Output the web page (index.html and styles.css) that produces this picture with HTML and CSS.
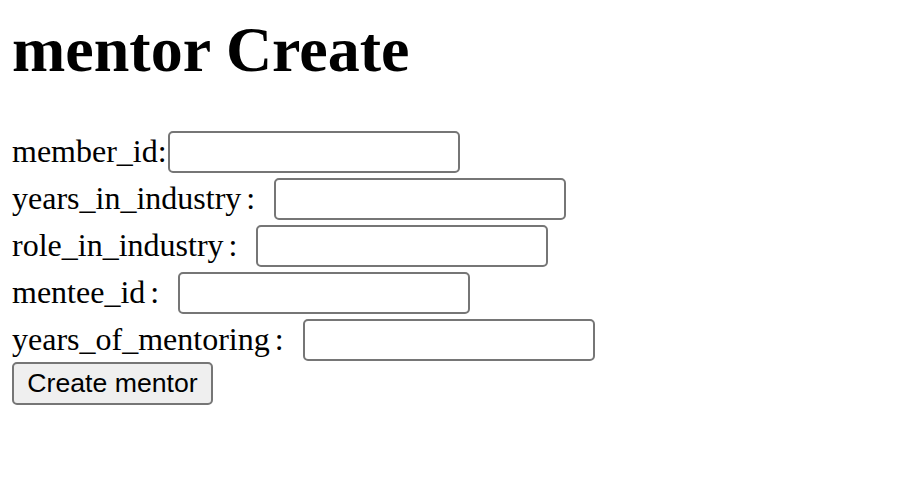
FILE: index.html
```html
<!DOCTYPE html>
<html>
<head>
<meta charset="utf-8">
<link rel="stylesheet" href="styles.css">
</head>
<body>
<h1 class="title">mentor Create</h1>
<form class="form">
  <div class="row"><label class="lbl">member_id:</label><input class="field tight" type="text"></div>
  <div class="row"><label class="lbl">years_in_industry<span class="colon">:</span></label><input class="field gap" type="text"></div>
  <div class="row"><label class="lbl">role_in_industry<span class="colon">:</span></label><input class="field gap" type="text"></div>
  <div class="row"><label class="lbl">mentee_id<span class="colon">:</span></label><input class="field gap" type="text"></div>
  <div class="row"><label class="lbl">years_of_mentoring<span class="colon">:</span></label><input class="field gap" type="text"></div>
  <div class="actions"><button class="btn" type="button">Create mentor</button></div>
</form>
</body>
</html>
```
FILE: styles.css
```css
html, body {
  margin: 0;
  padding: 0;
  background: #fff;
}
body {
  padding: 12px;
  font-family: "Liberation Serif", "Times New Roman", serif;
  font-size: 32px;
  color: #000;
}
.title {
  font-size: 64px;
  font-weight: bold;
  margin: 6px 0 0;
  line-height: 64px;
}
.form {
  margin-top: 46px;
  display: flex;
  flex-direction: column;
}
.row {
  display: flex;
  align-items: center;
  height: 47px;
}
.lbl {
  white-space: pre;
}
.colon {
  margin-left: 5px;
}
.field {
  box-sizing: border-box;
  width: 292px;
  height: 42px;
  border: 2px solid #767676;
  border-radius: 5px;
  margin: 0;
  padding: 0 4px;
  background: #fff;
  font-size: 26px;
}
.tight {
  margin-left: 1px;
}
.gap {
  margin-left: 19px;
}
.actions {
  display: flex;
}
.btn {
  box-sizing: border-box;
  width: 201px;
  height: 43px;
  border: 2px solid #767676;
  border-radius: 5px;
  background: #efefef;
  font-family: "Liberation Sans", Arial, sans-serif;
  font-size: 26.67px;
  color: #000;
  padding: 0;
  margin-top: -1px;
}
```
